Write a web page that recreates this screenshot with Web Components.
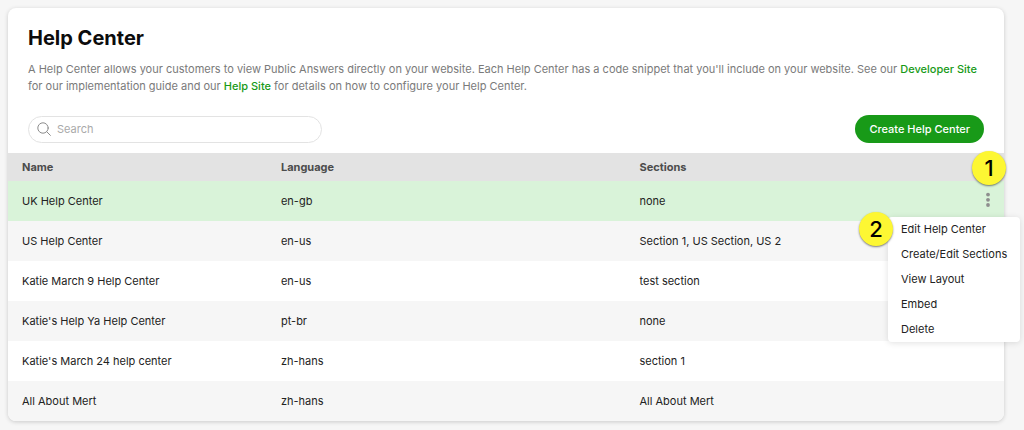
<!DOCTYPE html>
<html lang="en">
<head>
<meta charset="utf-8">
<meta name="viewport" content="width=device-width, initial-scale=1">
<title>Help Center</title>
<style>
  body {
    margin: 0;
    padding: 8px 20px 8px 8px;
    background: #f6f6f6;
    color: #222;
    font: 11px/17px Inter, "Liberation Sans", sans-serif;
  }
</style>
</head>
<body>
<hc-page></hc-page>

<script>
  const define = (name, html, setup) => {
    const template = document.createElement('template');
    template.innerHTML = html;
    customElements.define(name, class extends HTMLElement {
      constructor() {
        super();
        this.attachShadow({ mode: 'open' }).append(template.content.cloneNode(true));
      }
      connectedCallback() {
        if (setup) setup(this, this.shadowRoot);
      }
    });
  };

  define('hc-link', `
    <style>
      :host { display: inline; }
      a { color: #189a18; font-weight: 500; text-decoration: none; }
    </style>
    <a href="#"><slot></slot></a>`);

  define('hc-button', `
    <style>
      :host { display: block; }
      button {
        height: 28px; padding: 0 14px; border: 0; border-radius: 14px;
        background: #189a18; color: #fff; cursor: pointer;
        font: inherit; font-weight: 500; white-space: nowrap;
      }
    </style>
    <button type="button"><slot></slot></button>`);

  define('hc-search', `
    <style>
      :host { display: block; flex: 0 1 294px; }
      label {
        display: flex; align-items: center; gap: 6px; height: 27px; padding: 0 8px;
        box-sizing: border-box; border: 1px solid #e3e3e3; border-radius: 14px; background: #fff;
      }
      svg { flex: none; }
      input {
        flex: 1; min-width: 0; padding: 0; border: 0; outline: 0;
        background: none; color: inherit; font: inherit;
      }
      input::placeholder { color: #aaa; opacity: 1; }
    </style>
    <label>
      <svg width="14" height="14" viewBox="0 0 14 14" fill="none" stroke="#8c8c8c" stroke-linecap="round" aria-hidden="true">
        <circle cx="6" cy="6" r="5.2"/><path d="M9.8 9.8 13.4 13.4"/>
      </svg>
      <input type="search" placeholder="Search" aria-label="Search">
    </label>`);

  define('hc-badge', `
    <style>
      :host {
        display: grid; place-items: center; width: 34px; height: 34px; border-radius: 50%;
        background: #fdf733; color: #000; box-shadow: 0 1px 2px rgba(0, 0, 0, .5);
        font: 500 22px/34px Inter, "Liberation Sans", sans-serif;
      }
    </style>
    <slot></slot>`);

  define('hc-menu', `
    <style>
      :host {
        display: block; border-radius: 4px; background: #fff;
        box-shadow: 0 1px 6px rgba(0, 0, 0, .12);
      }
      ul { margin: 0; padding: 0; list-style: none; }
      button {
        display: block; width: 100%; height: 25px; padding: 0 13px; border: 0;
        background: none; color: #222; font: inherit; text-align: left; white-space: nowrap; cursor: pointer;
      }
    </style>
    <ul></ul>`, (host, root) => {
      root.querySelector('ul').innerHTML = host.getAttribute('items').split('|')
        .map(item => `<li><button type="button">${item}</button></li>`).join('');
    });

  define('hc-row-actions', `
    <style>
      :host { display: block; position: relative; width: 16px; height: 20px; }
      .more { display: block; width: 16px; height: 20px; padding: 0; border: 0; background: none; cursor: pointer; }
      svg { display: block; }
      hc-menu { position: absolute; z-index: 1; top: 26px; right: -24px; width: 132px; }
      .first, .second { position: absolute; z-index: 2; }
      .first { top: -40px; left: -8px; }
      .second { top: 21px; right: 103px; }
    </style>
    <button class="more" type="button" aria-label="More actions" aria-expanded="true">
      <svg width="16" height="20" viewBox="0 0 16 20" fill="#8e8e8e" aria-hidden="true">
        <circle cx="8" cy="3.6" r="1.9"/><circle cx="8" cy="8.8" r="1.9"/><circle cx="8" cy="14" r="1.9"/>
      </svg>
    </button>
    <hc-menu items="Edit Help Center|Create/Edit Sections|View Layout|Embed|Delete"></hc-menu>
    <hc-badge class="first">1</hc-badge>
    <hc-badge class="second">2</hc-badge>`);

  const centers = [
    ['UK Help Center', 'en-gb', 'none'],
    ['US Help Center', 'en-us', 'Section 1, US Section, US 2'],
    ['Katie March 9 Help Center', 'en-us', 'test section'],
    ["Katie's Help Ya Help Center", 'pt-br', 'none'],
    ["Katie's March 24 help center", 'zh-hans', 'section 1'],
    ['All About Mert', 'zh-hans', 'All About Mert']
  ];

  define('hc-table', `
    <style>
      :host { display: block; }
      table { width: 100%; table-layout: fixed; border-collapse: collapse; }
      th, td { box-sizing: border-box; padding: 0 0 0 14px; text-align: left; }
      th { height: 28px; background: #e3e3e3; color: #4c4c4c; font-weight: 700; }
      td { height: 40px; }
      th:nth-child(1) { width: 26%; }
      th:nth-child(2) { width: 36%; }
      th:last-child { width: 24px; }
      th:last-child, td:last-child { padding: 0; }
      tbody tr:nth-child(even) td { background: #f6f6f6; }
      tbody tr.active td { background: #d9f3d9; }
      tbody tr:last-child td:first-child { border-bottom-left-radius: 8px; }
      tbody tr:last-child td:last-child { border-bottom-right-radius: 8px; }
    </style>
    <table>
      <thead><tr><th scope="col">Name</th><th scope="col">Language</th><th scope="col">Sections</th><th></th></tr></thead>
      <tbody></tbody>
    </table>`, (host, root) => {
      root.querySelector('tbody').innerHTML = centers.map((row, i) =>
        `<tr${i ? '' : ' class="active"'}>${row.map(text => `<td>${text}</td>`).join('')}<td>${i ? '' : '<hc-row-actions></hc-row-actions>'}</td></tr>`
      ).join('');
    });

  define('hc-card', `
    <style>
      :host { display: block; border-radius: 8px; background: #fff; box-shadow: 0 1px 4px rgba(0, 0, 0, .18); }
      header { padding: 17px 20px 0; }
      .toolbar { display: flex; align-items: center; justify-content: space-between; gap: 20px; padding: 20px 20px 10px; }
    </style>
    <header><slot name="intro"></slot></header>
    <div class="toolbar"><slot name="toolbar"></slot></div>
    <slot></slot>`);

  define('hc-page', `
    <style>
      :host { display: block; }
      h1 { margin: 0 0 10px; color: #0c0c0c; font-size: 20px; line-height: 26px; font-weight: 700; }
      p { margin: 0; color: #7a7a7a; }
    </style>
    <hc-card>
      <div slot="intro">
        <h1>Help Center</h1>
        <p>A Help Center allows your customers to view Public Answers directly on your website. Each Help Center has a code snippet that you'll include on your website. See our <hc-link>Developer Site</hc-link> for our implementation guide and our <hc-link>Help Site</hc-link> for details on how to configure your Help Center.</p>
      </div>
      <hc-search slot="toolbar"></hc-search>
      <hc-button slot="toolbar">Create Help Center</hc-button>
      <hc-table></hc-table>
    </hc-card>`);
</script>
</body>
</html>
